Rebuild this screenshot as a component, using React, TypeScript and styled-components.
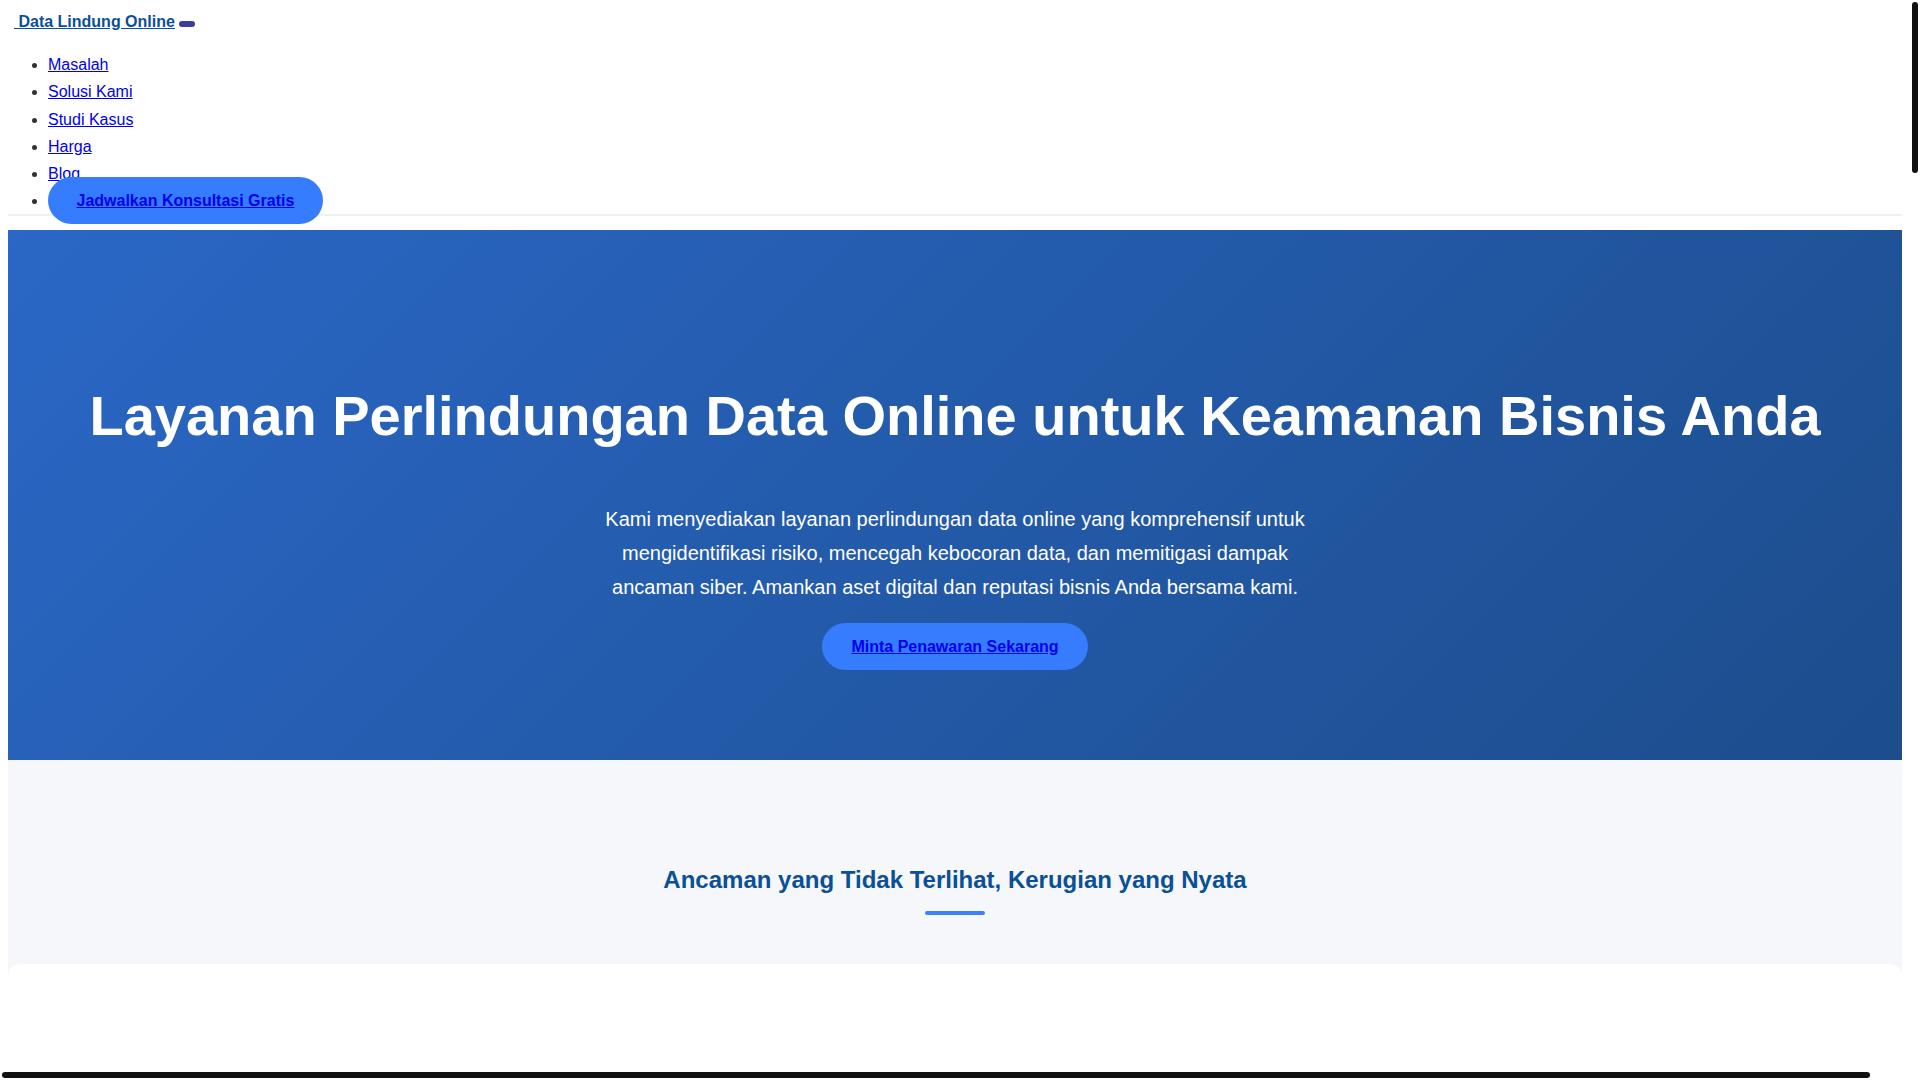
import React from "react";
import styled, { createGlobalStyle } from "styled-components";

const GlobalStyle = createGlobalStyle`
  body {
    margin: 8px 18px 8px 8px;
    font-family: "Liberation Sans", Arial, sans-serif;
    color: #333;
    line-height: 1.7;
    background: #fff;
  }
`;

const problems = [
  {
    title: "Kebocoran Data Pelanggan",
    text: "Satu celah keamanan dapat membuka akses ke ribuan data pribadi pelanggan dan merusak kepercayaan yang telah dibangun bertahun-tahun.",
  },
  {
    title: "Serangan Ransomware",
    text: "Operasional bisnis bisa lumpuh dalam hitungan jam ketika sistem dikunci oleh pelaku kejahatan siber yang meminta tebusan.",
  },
  {
    title: "Sanksi Regulasi",
    text: "Pelanggaran UU Pelindungan Data Pribadi dapat berujung pada denda besar dan tuntutan hukum terhadap perusahaan Anda.",
  },
];

const solutions = [
  "Audit & Penilaian Risiko",
  "Pemantauan Ancaman 24/7",
  "Enkripsi & Pencadangan Data",
  "Pelatihan Kesadaran Keamanan",
  "Respons Insiden Cepat",
  "Kepatuhan Regulasi",
];

const cases = [
  "Perusahaan fintech menurunkan insiden keamanan hingga 87% dalam enam bulan.",
  "Jaringan klinik kesehatan mengamankan rekam medis lebih dari 200.000 pasien.",
  "Toko online nasional lolos audit kepatuhan tanpa temuan kritis.",
];

const plans = [
  { name: "Starter", price: "Rp 2.500.000", note: "per bulan" },
  { name: "Bisnis", price: "Rp 6.900.000", note: "per bulan" },
  { name: "Enterprise", price: "Hubungi Kami", note: "sesuai kebutuhan" },
];

const posts = [
  "7 Langkah Awal Melindungi Data Pelanggan",
  "Memahami UU Pelindungan Data Pribadi",
  "Cara Mengenali Email Phishing di Kantor",
];

const App = () => {
  return (
    <>
      <GlobalStyle />
      <Header>
        <Brand>
          <Logo href="#">
            <LogoIcon /> Data Lindung Online
          </Logo>{" "}
          <MenuToggle aria-label="Menu" />
        </Brand>
        <NavList>
          <li>
            <NavLink href="#masalah">Masalah</NavLink>
          </li>
          <li>
            <NavLink href="#solusi">Solusi Kami</NavLink>
          </li>
          <li>
            <NavLink href="#studi">Studi Kasus</NavLink>
          </li>
          <li>
            <NavLink href="#harga">Harga</NavLink>
          </li>
          <li>
            <NavLink href="#blog">Blog</NavLink>
          </li>
          <li>
            <NavCta href="#kontak">Jadwalkan Konsultasi Gratis</NavCta>
          </li>
        </NavList>
      </Header>

      <Hero>
        <HeroTitle>Layanan Perlindungan Data Online untuk Keamanan Bisnis Anda</HeroTitle>
        <HeroText>
          Kami menyediakan layanan perlindungan data online yang komprehensif untuk
          mengidentifikasi risiko, mencegah kebocoran data, dan memitigasi dampak
          ancaman siber. Amankan aset digital dan reputasi bisnis Anda bersama kami.
        </HeroText>
        <HeroActions>
          <HeroButton href="#kontak">Minta Penawaran Sekarang</HeroButton>
        </HeroActions>
      </Hero>

      <Section id="masalah" $tone="#f5f7fb">
        <SectionTitle>Ancaman yang Tidak Terlihat, Kerugian yang Nyata</SectionTitle>
        <Card>
          <CardMedia />
          {problems.map((p) => (
            <ProblemItem key={p.title}>
              <ItemTitle>{p.title}</ItemTitle>
              <ItemText>{p.text}</ItemText>
            </ProblemItem>
          ))}
        </Card>
      </Section>

      <Section id="solusi" $tone="#fff">
        <SectionTitle>Solusi Perlindungan Data Menyeluruh</SectionTitle>
        <Grid>
          {solutions.map((s) => (
            <Tile key={s}>
              <CardMedia />
              <ItemTitle>{s}</ItemTitle>
              <ItemText>
                Layanan yang dirancang untuk menutup celah keamanan dan menjaga
                kelangsungan bisnis Anda setiap hari.
              </ItemText>
            </Tile>
          ))}
        </Grid>
      </Section>

      <Section id="studi" $tone="#f5f7fb">
        <SectionTitle>Studi Kasus</SectionTitle>
        {cases.map((c) => (
          <Card key={c}>
            <CardMedia />
            <ItemText>{c}</ItemText>
          </Card>
        ))}
      </Section>

      <Section id="harga" $tone="#fff">
        <SectionTitle>Paket Harga</SectionTitle>
        <Grid>
          {plans.map((p) => (
            <Tile key={p.name}>
              <ItemTitle>{p.name}</ItemTitle>
              <Price>{p.price}</Price>
              <ItemText>{p.note}</ItemText>
              <HeroButton href="#kontak">Pilih Paket</HeroButton>
            </Tile>
          ))}
        </Grid>
      </Section>

      <Section id="blog" $tone="#f5f7fb">
        <SectionTitle>Artikel Terbaru</SectionTitle>
        <Grid>
          {posts.map((p) => (
            <Tile key={p}>
              <CardMedia />
              <ItemTitle>{p}</ItemTitle>
            </Tile>
          ))}
        </Grid>
      </Section>

      <Footer>
        <p>&copy; 2024 Data Lindung Online. Semua hak dilindungi.</p>
      </Footer>

      <ScrollbarY>
        <ThumbY />
      </ScrollbarY>
      <ScrollbarX>
        <ThumbX />
      </ScrollbarX>
    </>
  );
};

const Header = styled.header`
  border-bottom: 2px solid #f0f0f0;
`;

const Brand = styled.div`
  padding-left: 6px;
`;

const Logo = styled.a`
  color: #0b4f96;
  font-size: 16px;
  font-weight: bold;
`;

const LogoIcon = styled.i`
  display: inline-block;
  width: 0;
`;

const MenuToggle = styled.button`
  display: inline-block;
  width: 16px;
  height: 6px;
  padding: 0;
  border: none;
  border-radius: 3px;
  background: #3b3e9e;
  vertical-align: baseline;
`;

const NavList = styled.ul`
  margin: 16px 0 0;
  padding-left: 40px;
  font-size: 16px;
`;

const NavLink = styled.a`
  color: #0000ee;
`;

const NavCta = styled.a`
  color: #0000ee;
  font-weight: bold;
  background: #367cff;
  padding: 15px 28.5px;
  border-radius: 50px;
`;

const Hero = styled.section`
  margin-top: 14px;
  padding: 152px 20px 90px;
  background: linear-gradient(135deg, #2a67c6 0%, #1c4d8c 100%);
  color: #fff;
  text-align: center;
`;

const HeroTitle = styled.h1`
  margin: 0 0 52px;
  font-size: 56px;
  line-height: 1.2;
  font-weight: bold;
`;

const HeroText = styled.p`
  max-width: 700px;
  margin: 0 auto 19px;
  font-size: 20px;
  line-height: 1.7;
`;

const HeroActions = styled.div`
  display: flex;
  justify-content: center;
`;

const HeroButton = styled.a`
  display: inline-block;
  padding: 10.4px 29px;
  border-radius: 50px;
  background: #367cff;
  color: #0000ee;
  font-weight: bold;
  font-size: 16px;
`;

const Section = styled.section<{ $tone: string }>`
  padding: 80px 0;
  background: ${({ $tone }) => $tone};
`;

const SectionTitle = styled.h2`
  margin: 20px 0 49px;
  text-align: center;
  color: #0b4f96;
  font-size: 24px;
  line-height: 1.7;

  &::after {
    content: "";
    display: block;
    width: 60px;
    height: 4px;
    margin: 10px auto 0;
    border-radius: 2px;
    background: #3b82f6;
  }
`;

const Card = styled.div`
  background: #fff;
  border-radius: 12px;
  padding: 0 40px 40px;
  margin-bottom: 30px;
`;

const CardMedia = styled.div`
  height: 140px;
`;

const ProblemItem = styled.div`
  padding: 20px 0;
`;

const ItemTitle = styled.h3`
  margin: 0 0 10px;
  color: #0b4f96;
  font-size: 20px;
`;

const ItemText = styled.p`
  margin: 0 0 12px;
  font-size: 16px;
`;

const Grid = styled.div`
  display: grid;
  grid-template-columns: 1fr;
  gap: 30px;
`;

const Tile = styled.div`
  background: #fff;
  border-radius: 12px;
  padding: 0 40px 30px;
`;

const Price = styled.div`
  font-size: 32px;
  font-weight: bold;
  color: #0b4f96;
`;

const Footer = styled.footer`
  padding: 20px 0;
  background: #0b2e5a;
  color: #fff;
  text-align: center;
`;

/* browser scrollbars as seen in the capture, laid over the page edge */
const ScrollbarY = styled.div`
  position: fixed;
  top: 0;
  right: 0;
  bottom: 10px;
  width: 10px;
  background: #fff;
`;

const ThumbY = styled.div`
  margin: 2px;
  height: 171px;
  border-radius: 3px;
  background: #111;
`;

const ScrollbarX = styled.div`
  position: fixed;
  left: 0;
  right: 10px;
  bottom: 0;
  height: 10px;
`;

const ThumbX = styled.div`
  margin: 2px 0 0 2px;
  width: 1868px;
  height: 6px;
  border-radius: 3px;
  background: #111;
`;

export default App;
